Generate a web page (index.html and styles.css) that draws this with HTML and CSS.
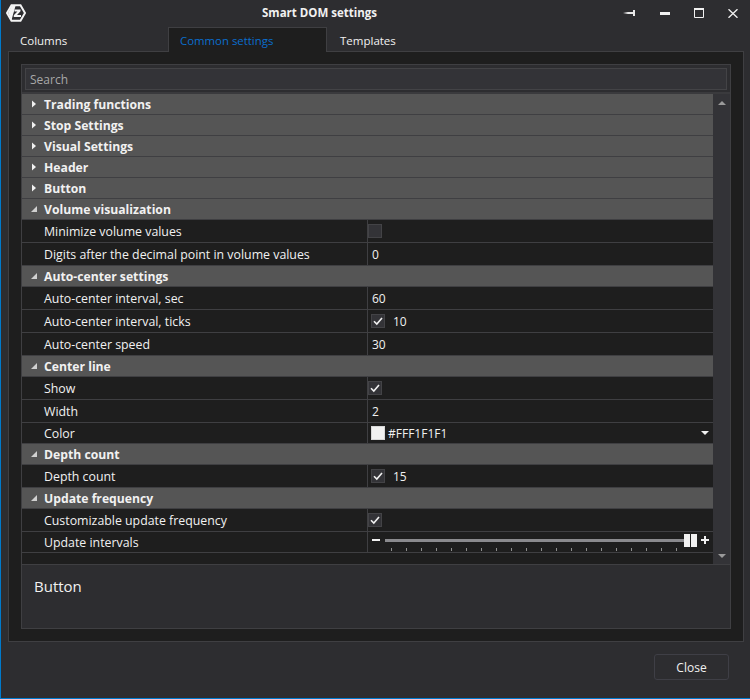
FILE: index.html
```html
<!DOCTYPE html>
<html lang="en">
<head>
<meta charset="utf-8">
<title>Smart DOM settings</title>
<link rel="stylesheet" href="styles.css">
</head>
<body>
<svg class="defs" width="0" height="0" aria-hidden="true">
  <defs>
    <symbol id="right" viewBox="0 0 6 8"><path d="M1 0.5 5 4 1 7.5Z" fill="#f1f1f1"/></symbol>
    <symbol id="down" viewBox="0 0 8 8"><path d="M7 1V7H1Z" fill="#d0d0d0"/></symbol>
    <symbol id="check" viewBox="0 0 14 14"><path d="M3 7.2 5.8 10 11 4" fill="none" stroke="#f1f1f1" stroke-width="1.6"/></symbol>
  </defs>
</svg>
<div class="window">
  <header class="titlebar">
    <svg class="logo" width="20" height="18" viewBox="0 0 20 18">
      <path d="M5.5 1.2H14.5L19 9 14.5 16.8H5.5L1 9Z" fill="#2d2d30" stroke="#f4f4f4" stroke-width="2"/>
      <path d="M5.5 2 9.5 2 5.5 16 2 9Z" fill="#f4f4f4"/>
      <path d="M8.5 5.5H14.5V7.2L11 11H15V13H7.8V11.2L11.4 7.5H8.5Z" fill="#f4f4f4"/>
    </svg>
    <h1 class="title">Smart DOM settings</h1>
    <div class="controls">
      <svg class="ctl ctl-pin" width="12" height="6" viewBox="0 0 12 6"><path d="M0 3 5 2H10V0H12V6H10V4H5Z" fill="#e8e8e8"/></svg>
      <svg class="ctl ctl-min" width="10" height="3" viewBox="0 0 10 3"><rect width="10" height="3" fill="#f1f1f1"/></svg>
      <svg class="ctl ctl-max" width="10" height="10" viewBox="0 0 10 10"><path d="M0.5 1.5H9.5V9.5H0.5Z" fill="none" stroke="#f1f1f1"/><rect width="10" height="2" fill="#f1f1f1"/></svg>
      <svg class="ctl ctl-close" width="10" height="9" viewBox="0 0 10 9"><path d="M0.5 0.2 9.5 8.8M9.5 0.2 0.5 8.8" stroke="#f1f1f1" stroke-width="1.3"/></svg>
    </div>
  </header>
  <nav class="tabs">
    <div class="tab tab-columns">Columns</div>
    <div class="tab tab-active">Common settings</div>
    <div class="tab tab-templates">Templates</div>
  </nav>
  <main class="panel">
    <div class="box">
      <div class="searchbar"><div class="search">Search</div></div>
      <div class="body">
        <div class="list">
          <div class="group"><svg class="arrow"><use href="#right"/></svg>Trading functions</div>
          <div class="group"><svg class="arrow"><use href="#right"/></svg>Stop Settings</div>
          <div class="group"><svg class="arrow"><use href="#right"/></svg>Visual Settings</div>
          <div class="group"><svg class="arrow"><use href="#right"/></svg>Header</div>
          <div class="group"><svg class="arrow"><use href="#right"/></svg>Button</div>
          <div class="group"><svg class="arrow"><use href="#down"/></svg>Volume visualization</div>
          <div class="row"><div class="label">Minimize volume values</div><div class="value flush"><span class="cb"></span></div></div>
          <div class="row"><div class="label">Digits after the decimal point in volume values</div><div class="value">0</div></div>
          <div class="group"><svg class="arrow"><use href="#down"/></svg>Auto-center settings</div>
          <div class="row"><div class="label">Auto-center interval, sec</div><div class="value">60</div></div>
          <div class="row"><div class="label">Auto-center interval, ticks</div><div class="value"><span class="cb cb-in"><svg class="tick"><use href="#check"/></svg></span><span class="num">10</span></div></div>
          <div class="row"><div class="label">Auto-center speed</div><div class="value">30</div></div>
          <div class="group"><svg class="arrow"><use href="#down"/></svg>Center line</div>
          <div class="row"><div class="label">Show</div><div class="value flush"><span class="cb"><svg class="tick"><use href="#check"/></svg></span></div></div>
          <div class="row"><div class="label">Width</div><div class="value">2</div></div>
          <div class="row row-short"><div class="label">Color</div><div class="value colorval"><span class="swatch"></span><span class="hex">#FFF1F1F1</span><svg class="combo" width="8" height="4" viewBox="0 0 8 4"><path d="M0 0H8L4 4Z" fill="#f1f1f1"/></svg></div></div>
          <div class="group"><svg class="arrow"><use href="#down"/></svg>Depth count</div>
          <div class="row"><div class="label">Depth count</div><div class="value"><span class="cb cb-in"><svg class="tick"><use href="#check"/></svg></span><span class="num">15</span></div></div>
          <div class="group"><svg class="arrow"><use href="#down"/></svg>Update frequency</div>
          <div class="row"><div class="label">Customizable update frequency</div><div class="value flush"><span class="cb"><svg class="tick"><use href="#check"/></svg></span></div></div>
          <div class="row row-short"><div class="label">Update intervals</div>
            <div class="value sliderval">
              <span class="minus"></span>
              <div class="slider">
                <div class="slider-main"><div class="track"></div><span class="thumb"></span><span class="thumb"></span></div>
                <div class="ticks"><i></i><i></i><i></i><i></i><i></i><i></i><i></i><i></i><i></i><i></i><i></i><i></i><i></i><i></i><i></i><i></i><i></i><i></i><i></i><i></i></div>
              </div>
              <span class="plus"></span>
            </div>
          </div>
        </div>
        <div class="scrollbar">
          <svg width="8" height="4" viewBox="0 0 8 4"><path d="M4 0 8 4H0Z" fill="#9a9a9a"/></svg>
          <svg width="8" height="4" viewBox="0 0 8 4"><path d="M0 0H8L4 4Z" fill="#9a9a9a"/></svg>
        </div>
      </div>
      <div class="desc">Button</div>
    </div>
  </main>
  <footer class="footer"><button class="close" type="button">Close</button></footer>
</div>
</body>
</html>
```
FILE: styles.css
```css
* { box-sizing: border-box; }
html, body { margin: 0; padding: 0; background: #2d2d30; }
.defs { position: absolute; }
body { font-family: "Open Sans", "Noto Sans", sans-serif; font-size: 12.35px; color: #f1f1f1; }
.window { width: 750px; height: 699px; display: flex; flex-direction: column; background: #2d2d30; border-left: 1px solid #007acc; border-bottom: 1px solid #007acc; overflow: hidden; }

.titlebar { height: 27px; flex: none; display: flex; align-items: center; position: relative; padding-left: 5px; }
.logo { flex: none; margin-top: -1px; }
.title { position: absolute; left: 261px; top: 5px; margin: 0; font-size: 11.5px; font-weight: 700; line-height: 16px; color: #f1f1f1; white-space: nowrap; }
.controls { margin-left: auto; display: flex; align-items: center; margin-right: 12px; margin-top: -1px; }
.ctl { display: block; flex: none; }
.ctl-pin { margin-right: 25px; }
.ctl-min { margin-right: 24px; }
.ctl-max { margin-right: 24px; }

.tabs { height: 24px; flex: none; display: flex; padding-left: 7px; position: relative; z-index: 1; }
.tab { height: 25px; line-height: 28px; font-size: 11.5px; color: #f1f1f1; }
.tab-columns { width: 160px; padding-left: 12px; }
.tab-active { width: 159px; padding-left: 11px; color: #0a6ecf; background: #1e1e1e; border: 1px solid #3f3f42; border-bottom: 0; line-height: 26px; font-size: 11.4px; }
.tab-templates { padding-left: 13px; }

.panel { width: 736px; height: 591px; flex: none; margin-left: 7px; padding: 12px; background: #1e1e1e; border: 1px solid #3f3f42; }
.box { height: 565px; display: flex; flex-direction: column; border: 1px solid #3f3f42; }
.searchbar { height: 29px; flex: none; padding: 3px 3px 0; border-bottom: 2px solid #3a3a3d; background: #2d2d30; }
.search { height: 22px; line-height: 21px; padding-left: 4px; background: #333337; border: 1px solid #434346; color: #a8a8a8; font-size: 12px; }

.body { height: 470px; flex: none; display: flex; }
.list { flex: 1; min-width: 0; display: flex; flex-direction: column; background: #1e1e1e; }
.group { height: 21px; flex: none; display: flex; align-items: center; background: #555555; border-bottom: 1px solid #3f3f42; font-weight: 700; padding: 1px 0 0 8px; font-size: 12.2px; line-height: 20px; }
.arrow { width: 8px; height: 8px; margin: -1px 6px 0 0; flex: none; }
.row { height: 23px; flex: none; display: flex; border-bottom: 1px solid #3f3f42; }
.row-short { height: 21px; }
.label { width: 346px; flex: none; padding-left: 22px; border-right: 1px solid #3f3f42; line-height: 24px; white-space: nowrap; }
.row-short .label { line-height: 22px; }
.value { flex: 1; min-width: 0; display: flex; align-items: center; padding-left: 4px; font-size: 12px; }
.value.flush { padding-left: 0; }
.cb { width: 14px; height: 14px; flex: none; background: #333337; border: 1px solid #434346; display: block; position: relative; }
.cb-in { margin-left: -1px; }
.tick { position: absolute; left: -1px; top: -1px; width: 14px; height: 14px; }
.num { margin-left: 8px; }
.swatch { width: 14px; height: 14px; flex: none; background: #f1f1f1; border: 1px solid #d8d8d8; margin: 0 3px 0 -1px; }
.combo { margin-left: auto; margin-right: 4px; flex: none; }
.sliderval { padding-left: 4px; position: relative; }
.minus { width: 8px; height: 2px; background: #f1f1f1; flex: none; margin-top: -5px; }
.slider { width: 312px; flex: none; margin: 0 4px 0 5px; }
.slider-main { display: flex; align-items: center; height: 13px; margin-top: 1px; }
.track { width: 299px; height: 3px; background: #8a8a8e; flex: none; }
.thumb { width: 6px; height: 13px; background: #f1f1f1; flex: none; margin-right: 1px; }
.ticks { display: flex; gap: 14px; padding-left: 6px; height: 4px; margin-top: 1px; }
.ticks i { width: 1px; height: 3px; background: #8f8f8f; flex: none; }
.plus { width: 8px; height: 8px; flex: none; margin-top: -5px; background: linear-gradient(#f1f1f1, #f1f1f1) center / 8px 2px no-repeat, linear-gradient(#f1f1f1, #f1f1f1) center / 2px 8px no-repeat; }

.scrollbar { width: 17px; flex: none; background: #333337; display: flex; flex-direction: column; justify-content: space-between; align-items: center; padding: 7px 0 6px; }
.scrollbar svg { display: block; }

.desc { flex: 1; background: #2d2d30; border-top: 1px solid #3f3f42; padding: 10px 12px; font-size: 15px; line-height: 22px; }

.footer { flex: 1; display: flex; justify-content: flex-end; padding: 12px 21px 0 0; }
.close { width: 75px; height: 26px; padding: 0; background: #2d2d30; border: 1px solid #3f3f46; border-radius: 3px; color: #f1f1f1; font: 12px "Open Sans", "Noto Sans", sans-serif; }
```
